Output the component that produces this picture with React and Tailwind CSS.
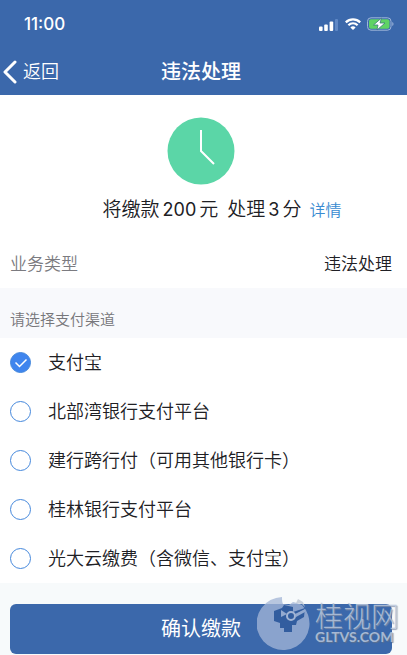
import { useState } from "react";

const channels = [
  "支付宝",
  "北部湾银行支付平台",
  "建行跨行付（可用其他银行卡）",
  "桂林银行支付平台",
  "光大云缴费（含微信、支付宝）",
];

function StatusBar() {
  return (
    <div className="flex h-12 items-center justify-between pl-6 pr-[13px]">
      <span className="text-[17px] leading-6 font-medium">11:00</span>
      <div className="flex items-center gap-[6px]">
        <svg width="20" height="13" viewBox="0 0 20 13" aria-hidden="true">
          <rect x="0" y="8.500" width="3.600" height="4.500" rx="1" fill="#fff" />
          <rect x="5.200" y="6.500" width="3.600" height="6.500" rx="1" fill="#fff" />
          <rect x="10.600" y="3.500" width="3.600" height="9.500" rx="1" fill="#fff" />
          <rect x="16" y="1" width="3" height="12" rx="1" fill="#5f88c6" />
        </svg>
        <svg width="16" height="12" viewBox="0 0 16 12" aria-hidden="true">
          <g fill="none" stroke="#fff" strokeWidth="2.2">
            <path d="M.8 4.4C4.8.4 11.2.4 15.2 4.4" />
            <path d="M3.4 7.2c2.6-2.6 6.6-2.6 9.2 0" />
          </g>
          <path d="M8 12 5.4 9.4c1.5-1.4 3.7-1.4 5.2 0z" fill="#fff" />
        </svg>
        <svg width="27" height="14" viewBox="0 0 27 14" aria-hidden="true">
          <rect x=".5" y=".8" width="23.500" height="12.400" rx="3.500" fill="none" stroke="#9fb5da" />
          <rect x="2" y="2.300" width="20.500" height="9.400" rx="2" fill="#5fd364" />
          <path d="M25.300 5v4c1.600-.6 1.600-3.400 0-4z" fill="#9fb5da" />
          <path d="M14.500 1 6.500 8H11l-1 5 8-7h-5z" fill="#fff" stroke="#3b7a78" strokeWidth=".8" />
        </svg>
      </div>
    </div>
  );
}

function Watermark() {
  return (
    <div className="pointer-events-none absolute right-2 -top-2 flex items-center gap-1 text-[#b9c6db] opacity-85">
      <svg width="54" height="54" viewBox="0 0 54 54" aria-hidden="true">
        <path
          d="M25 1c0 3 0 5 1 7l6 1 4-3 4 1 5 2A26.500 26.500 0 1 1 25 1z"
          fill="#a3b6d7"
          fillOpacity=".9"
        />
        <path d="M41 3l5 3 2 5-3-3-6-1z" fill="#c3cbd6" />
        <path
          d="M17 15l8-3 2-3 9 2v5l12-4-1 9-7 4-1 4h-4v7h-8v-4h-4v-5l-6-2z"
          fill="#315c9e"
        />
        <path d="m24 14 6 4-6 3zM38 18l10-5v3l-9 5z" fill="#a3b6d7" />
        <circle cx="34" cy="20" r="4" fill="#315c9e" stroke="#b4c3dd" strokeWidth="2" />
      </svg>
      <div className="flex flex-col items-start">
        <span className="text-[28px] leading-7 font-light [text-shadow:1px_1px_1px_#8793a8]">桂视网</span>
        <span className="font-['Lato'] text-sm leading-3 font-bold [text-shadow:1px_1px_1px_#64748b]">
          GLTVS.COM
        </span>
      </div>
    </div>
  );
}

export default function App() {
  const [selected, setSelected] = useState(0);

  return (
    <div className="min-h-screen bg-[#f7fafb] font-['Inter','Noto_Sans_CJK_SC',sans-serif] text-[#202024]">
      <header className="bg-[#3b68ab] text-white">
        <StatusBar />
        <nav className="grid h-[47px] grid-cols-3 items-center pl-[3px] pr-2">
          <button type="button" className="flex items-center gap-[6px] text-lg font-[350]">
            <svg width="14" height="24" viewBox="0 0 14 24" fill="none" aria-hidden="true">
              <path d="M12 2 2 12l10 10" stroke="#fff" strokeWidth="3" strokeLinecap="round" strokeLinejoin="round" />
            </svg>
            返回
          </button>
          <h1 className="text-center text-xl font-medium">违法处理</h1>
        </nav>
      </header>

      <main>
        <section className="bg-white">
          <div className="flex flex-col items-center pt-[22px] pr-[5px]">
            <svg width="68" height="68" viewBox="0 0 68 68" aria-hidden="true">
              <circle cx="34" cy="34" r="33.500" fill="#5bd6a7" />
              <path d="M34 13v21l13 13" fill="none" stroke="#fff" strokeWidth="2" />
            </svg>
          </div>
          <div className="flex h-[50px] items-center justify-center pl-[37px] text-[19px] font-[350]">
            <p className="flex items-center gap-[3px] whitespace-nowrap">
              将缴款<span className="text-lg font-normal">200</span>元<span className="ml-[6px]">处理</span>
              <span className="text-lg font-normal">3</span>分
            </p>
            <a href="#detail" className="ml-2 text-base text-[#398bd1]">
              详情
            </a>
          </div>
          <dl className="flex h-[53px] items-center justify-between pt-[6px] pl-[10px] pr-[15px] text-[17px] font-[350]">
            <dt className="text-[#7b7b80]">业务类型</dt>
            <dd>违法处理</dd>
          </dl>
        </section>

        <fieldset>
          <legend className="flex h-[50px] w-full items-center bg-[#f8f9fc] px-[10px] pt-[14px] text-[15px] font-[350] text-[#77777b]">
            请选择支付渠道
          </legend>
          <div className="bg-white">
            {channels.map((name, i) => (
              <label key={name} className="flex h-[49px] items-center gap-[17px] px-[10px] text-lg font-[350]">
                <span className="grid">
                  <input
                    type="radio"
                    name="channel"
                    checked={selected === i}
                    onChange={() => setSelected(i)}
                    className="col-start-1 row-start-1 size-[21px] appearance-none rounded-full border border-[#4588dc] checked:bg-[#3f85ee]"
                  />
                  {selected === i && (
                    <svg
                      className="pointer-events-none col-start-1 row-start-1"
                      width="21"
                      height="21"
                      viewBox="0 0 21 21"
                      aria-hidden="true"
                    >
                      <path d="m5.500 10.500 4 4 7-7" fill="none" stroke="#fff" strokeWidth="1.500" />
                    </svg>
                  )}
                </span>
                {name}
              </label>
            ))}
          </div>
        </fieldset>

        <div className="relative mt-[21px] pb-px pl-[10px] pr-[15px]">
          <button type="button" className="block h-[50px] w-full rounded-md bg-[#3b68ab] text-xl text-white">
            确认缴款
          </button>
          <Watermark />
        </div>
      </main>
    </div>
  );
}
